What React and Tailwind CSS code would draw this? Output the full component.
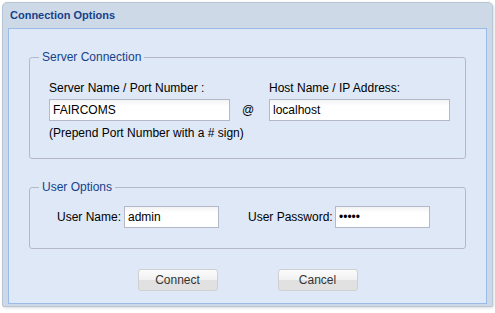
const font = { fontFamily: '"Liberation Sans", Arial, sans-serif' };

function TextBox({ value, width, type = 'text' }) {
  return (
    <input
      type={type}
      value={value}
      readOnly
      style={font}
      className={`${width} h-[22px] border border-[#b5b8c8] bg-gradient-to-b from-[#f3f3f3] to-white to-[30%] px-[3px] text-[12px] text-black outline-none`}
    />
  );
}

function Button({ children }) {
  return (
    <button
      style={font}
      className="w-[80px] h-[22px] rounded-[3px] border border-[#d0d0d0] bg-gradient-to-b from-[#fbfbfb] via-[#f1f1f1] via-50% to-[#e1e1e1] to-50% text-[12px] text-[#333]"
    >
      {children}
    </button>
  );
}

function Group({ title, children, className = '' }) {
  return (
    <fieldset className={`mx-[20px] rounded-[3px] border border-[#b5b8c8] ${className}`}>
      <legend className="ml-[9px] px-[3px] text-[12px] leading-[15px] text-[#15428b]">{title}</legend>
      {children}
    </fieldset>
  );
}

export default function App() {
  return (
    <div style={font} className="w-[495px] h-[313px] bg-white pt-[2px] pl-[2px] overflow-hidden">
      <div className="w-[491px] h-[305px] rounded-t-[5px] rounded-b-[2px] border border-[#b8c6d6] bg-[#cdd9e7] shadow-[1px_1px_3px_rgba(0,0,0,0.15)]">
        <div className="h-[25px] px-[7px] flex items-center text-[11px] font-bold text-[#15428b]">
          Connection Options
        </div>
        <div className="mx-[5px] h-[276px] border border-[#99bbe8] bg-[#dfe8f6] pt-[21px] text-[12px] leading-[15px] text-black">
          <Group title="Server Connection">
            <div className="pl-[19px] pt-[16px] pb-[17px] grid grid-cols-[181px_39px_181px] items-center">
              <span>Server Name / Port Number :</span>
              <span />
              <span>Host Name / IP Address:</span>
              <div className="mt-[3px]">
                <TextBox value="FAIRCOMS" width="w-[181px]" />
              </div>
              <span className="mt-[3px] text-center pr-[3px]">@</span>
              <div className="mt-[3px]">
                <TextBox value="localhost" width="w-[181px]" />
              </div>
              <span className="col-span-3 mt-[5px]">(Prepend Port Number with a # sign)</span>
            </div>
          </Group>
          <Group title="User Options" className="mt-[21px]">
            <div className="pt-[11px] pb-[20px] pl-[27px] flex items-center">
              <span className="w-[67px]">User Name:</span>
              <TextBox value="admin" width="w-[95px]" />
              <span className="ml-[29px] w-[87px]">User Password:</span>
              <TextBox value="admin" type="password" width="w-[95px]" />
            </div>
          </Group>
          <div className="mt-[20px] flex justify-center gap-[60px]">
            <Button>Connect</Button>
            <Button>Cancel</Button>
          </div>
        </div>
      </div>
    </div>
  );
}
